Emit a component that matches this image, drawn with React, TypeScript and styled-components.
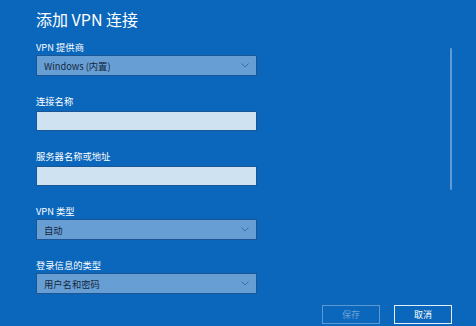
import React from 'react';
import styled, { createGlobalStyle } from 'styled-components';

const GlobalStyle = createGlobalStyle`
    html, body {
        margin: 0;
        padding: 0;
        background: #0a67bc;
    }
    body {
        font-family: 'Noto Sans CJK SC', 'Noto Sans', sans-serif;
    }
`;

const Page = styled.div`
    position: relative;
    width: 476px;
    height: 326px;
    overflow: hidden;
    background: #0a67bc;
    color: #ffffff;
    padding: 0 0 0 36px;
    box-sizing: border-box;
    display: flex;
    flex-direction: column;
`;

const Title = styled.h1`
    margin: 6px 0 0 0;
    height: 26px;
    line-height: 26px;
    font-size: 16px;
    font-weight: 400;
`;

const Form = styled.div`
    display: flex;
    flex-direction: column;
    margin-top: 8px;
    width: 221px;
`;

const Field = styled.div<{ $input?: boolean }>`
    display: flex;
    flex-direction: column;
    gap: ${(props) => (props.$input ? '3px' : '1px')};
    margin-bottom: 18px;

    &:last-child {
        margin-bottom: 0;
    }
`;

const Label = styled.label`
    height: 14px;
    line-height: 14px;
    font-size: 9.3px;
    color: #ffffff;
`;

const SelectBox = styled.div`
    height: 21px;
    box-sizing: border-box;
    border: 1px solid #1b5593;
    background: #679ed4;
    display: flex;
    align-items: center;
    justify-content: space-between;
    padding: 0 7px 0 7px;
    font-size: 9.3px;
    color: #14283d;
`;

const TextBox = styled.div`
    height: 20px;
    box-sizing: border-box;
    border: 1px solid #1b5593;
    background: #cfe2f2;
`;

const Footer = styled.div`
    margin-top: auto;
    margin-bottom: 2px;
    display: flex;
    justify-content: flex-end;
    gap: 14px;
    padding-right: 24px;
`;

const Button = styled.button<{ $disabled?: boolean }>`
    width: 58px;
    height: 19px;
    box-sizing: border-box;
    background: transparent;
    border: 1px solid ${(props) => (props.$disabled ? '#5c98d1' : '#e4eef8')};
    color: ${(props) => (props.$disabled ? '#6aa2d6' : '#ffffff')};
    font-family: 'Noto Sans CJK SC', sans-serif;
    font-size: 9px;
    padding: 0;
    line-height: 17px;
`;

const ScrollThumb = styled.div`
    position: absolute;
    left: 450px;
    top: 48px;
    width: 2px;
    height: 142px;
    border-radius: 1px;
    background: rgba(200, 222, 244, 0.45);
`;

const Chevron = () => (
    <svg width="8" height="5" viewBox="0 0 8 5">
        <path d="M0.5 0.5 L4 4 L7.5 0.5" fill="none" stroke="#3b6ea6" strokeWidth="1" />
    </svg>
);

type FieldDef = {
    label: string;
    kind: 'select' | 'input';
    value?: string;
};

const fields: FieldDef[] = [
    { label: 'VPN 提供商', kind: 'select', value: 'Windows (内置)' },
    { label: '连接名称', kind: 'input' },
    { label: '服务器名称或地址', kind: 'input' },
    { label: 'VPN 类型', kind: 'select', value: '自动' },
    { label: '登录信息的类型', kind: 'select', value: '用户名和密码' },
];

const App = () => {
    return (
        <>
            <GlobalStyle />
            <Page>
                <Title>添加 VPN 连接</Title>
                <Form>
                    {fields.map((f) => (
                        <Field key={f.label} $input={f.kind === 'input'}>
                            <Label>{f.label}</Label>
                            {f.kind === 'select' ? (
                                <SelectBox>
                                    <span>{f.value}</span>
                                    <Chevron />
                                </SelectBox>
                            ) : (
                                <TextBox />
                            )}
                        </Field>
                    ))}
                </Form>
                <Footer>
                    <Button $disabled>保存</Button>
                    <Button>取消</Button>
                </Footer>
                <ScrollThumb />
            </Page>
        </>
    );
};

export default App;
